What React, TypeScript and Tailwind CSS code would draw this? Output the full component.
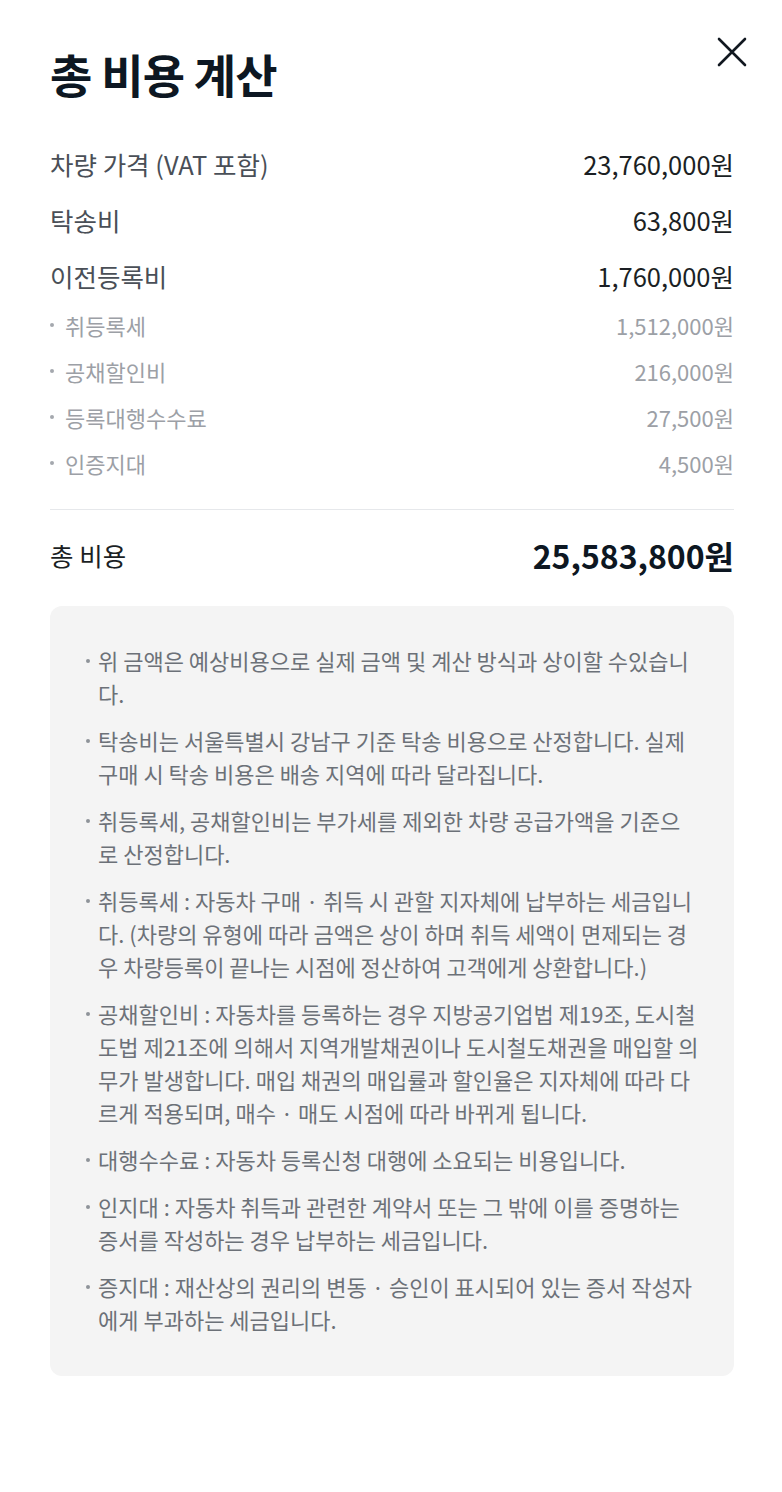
import React from 'react';

const mainRows = [
  { label: '차량 가격 (VAT 포함)', value: '23,760,000원' },
  { label: '탁송비', value: '63,800원' },
  { label: '이전등록비', value: '1,760,000원' },
];

const subRows = [
  { label: '취등록세', value: '1,512,000원' },
  { label: '공채할인비', value: '216,000원' },
  { label: '등록대행수수료', value: '27,500원' },
  { label: '인증지대', value: '4,500원' },
];

// the 5th note breaks by hand, as in the design
const notes = [
  '위 금액은 예상비용으로 실제 금액 및 계산 방식과 상이할 수있습니다.',
  '탁송비는 서울특별시 강남구 기준 탁송 비용으로 산정합니다. 실제 구매 시 탁송 비용은 배송 지역에 따라 달라집니다.',
  '취등록세, 공채할인비는 부가세를 제외한 차량 공급가액을 기준으로 산정합니다.',
  '취등록세 : 자동차 구매 · 취득 시 관할 지자체에 납부하는 세금입니다. (차량의 유형에 따라 금액은 상이 하며 취득 세액이 면제되는 경우 차량등록이 끝나는 시점에 정산하여 고객에게 상환합니다.)',
  '공채할인비 : 자동차를 등록하는 경우 지방공기업법 제19조, 도시철도법 제21조에 의해서 지역개발채권이나 도시철도채권을 매입할 의무가 발생합니다. 매입 채권의 매입률과 할인율은 지자체에 따라 다\n르게 적용되며, 매수 · 매도 시점에 따라 바뀌게 됩니다.',
  '대행수수료 : 자동차 등록신청 대행에 소요되는 비용입니다.',
  '인지대 : 자동차 취득과 관련한 계약서 또는 그 밖에 이를 증명하는 증서를 작성하는 경우 납부하는 세금입니다.',
  '증지대 : 재산상의 권리의 변동 · 승인이 표시되어 있는 증서 작성자에게 부과하는 세금입니다.',
];

const font = { fontFamily: '"Noto Sans CJK KR", "Noto Sans", sans-serif' };

const CostModal = () => {
  return (
    <div className="relative w-full min-h-[1492px] bg-white pl-[50px] pr-[48px] pt-[45px]" style={font}>
      {/* close */}
      <button className="absolute top-[36px] right-[34px] w-[32px] h-[32px] flex items-center justify-center">
        <svg width="30" height="30" viewBox="0 0 30 30" fill="none">
          <path d="M2 2L28 28M28 2L2 28" stroke="#111820" strokeWidth="2.6" strokeLinecap="round" />
        </svg>
      </button>

      <h1 className="text-[46px] leading-[56px] font-bold text-[#0d1722] tracking-[-0.8px]">총 비용 계산</h1>

      <div className="mt-[35px]">
        {mainRows.map((r) => (
          <div key={r.label} className="flex items-center justify-between h-[56px] text-[25.5px]">
            <span className="text-[#4a4f57]">{r.label}</span>
            <span className="text-[#1b1f24]">{r.value}</span>
          </div>
        ))}
        <div className="mt-[-2px]">
          {subRows.map((r) => (
            <div key={r.label} className="flex items-center justify-between h-[46px] text-[22px] text-[#9ca0a6]">
              <span className="flex items-center">
                <span className="w-[4px] h-[4px] rounded-full bg-[#a4a8ae] mr-[11px]" />
                {r.label}
              </span>
              <span>{r.value}</span>
            </div>
          ))}
        </div>
      </div>

      <div className="mt-[23px] border-t border-[#e6e8eb]" />

      <div className="flex items-center justify-between h-[90px]">
        <span className="text-[25.5px] text-[#1b1f24]">총 비용</span>
        <span className="text-[32px] font-bold text-[#0d1722]">25,583,800원</span>
      </div>

      <div className="mt-[6px] rounded-[12px] bg-[#f4f4f4] pl-[36px] pr-[36px] pt-[38px] pb-[40px]">
        <ul className="flex flex-col gap-[14px]">
          {notes.map((n, i) => (
            <li
              key={i}
              className={`flex text-[22px] leading-[33px] text-[#6c7178] ${i === 4 ? 'mr-[-16px]' : ''}`}
            >
              <span className="shrink-0 w-[12px] h-[33px] flex items-center">
                <span className="w-[4px] h-[4px] rounded-full bg-[#8e9399]" />
              </span>
              <span className="whitespace-pre-line">{n}</span>
            </li>
          ))}
        </ul>
      </div>
    </div>
  );
};

export default function App() {
  return <CostModal />;
}
